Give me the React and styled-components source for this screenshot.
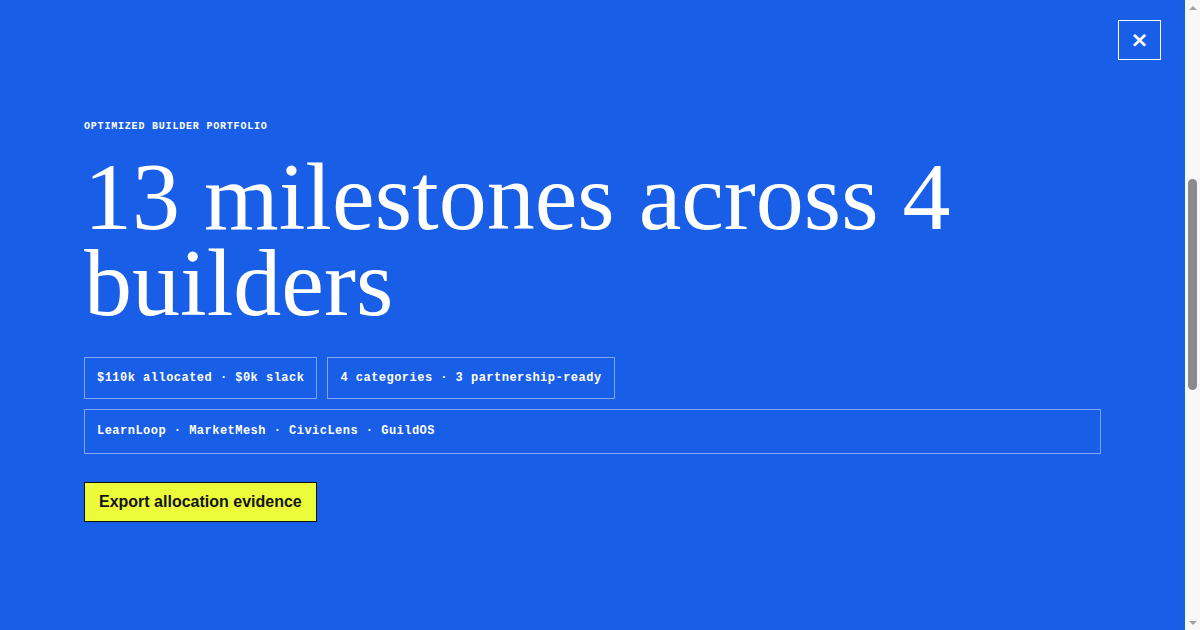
import { useLayoutEffect } from "react";
import styled, { createGlobalStyle } from "styled-components";

const GlobalStyle = createGlobalStyle`
  html, body {
    margin: 0;
    padding: 0;
  }

  body {
    background: #ffffff;
    font-family: "Liberation Sans", Arial, sans-serif;
  }
`;

const portfolio = {
  eyebrow: "Optimized builder portfolio",
  milestones: 13,
  builders: ["LearnLoop", "MarketMesh", "CivicLens", "GuildOS"],
  allocated: "$110k",
  slack: "$0k",
  categories: 4,
  partnershipReady: 3,
};

const App = () => {
  useLayoutEffect(() => {
    window.scrollTo(0, 490);
  }, []);

  const stats = [
    `${portfolio.allocated} allocated · ${portfolio.slack} slack`,
    `${portfolio.categories} categories · ${portfolio.partnershipReady} partnership-ready`,
  ];

  return (
    <>
      <GlobalStyle />
      <PageBehind />

      <Overlay role="dialog" aria-label="Optimized builder portfolio">
        <CloseButton aria-label="Close">×</CloseButton>

        <Content>
          <Eyebrow>{portfolio.eyebrow}</Eyebrow>

          <Headline>
            {portfolio.milestones} milestones across {portfolio.builders.length}{" "}
            builders
          </Headline>

          <StatRow>
            {stats.map((stat) => (
              <Pill key={stat}>{stat}</Pill>
            ))}
          </StatRow>

          <Pill wide>{portfolio.builders.join(" · ")}</Pill>

          <ExportButton>Export allocation evidence</ExportButton>
        </Content>
      </Overlay>

      {/* window scrollbar, the page under the dialog is scrolled */}
      <ScrollTrack aria-hidden="true">
        <ScrollArrow />
        <ScrollThumbArea>
          <ScrollThumb />
        </ScrollThumbArea>
        <ScrollArrow down />
      </ScrollTrack>
    </>
  );
};

export default App;

const PageBehind = styled.div`
  height: 1790px;
`;

const Overlay = styled.div`
  position: fixed;
  top: 0;
  bottom: 0;
  left: 0;
  right: 15px;
  background: #185ee6;
  color: #ffffff;
  padding: 121px 84px 0;
  box-sizing: border-box;
  overflow: hidden;
`;

const CloseButton = styled.button`
  position: absolute;
  top: 20px;
  right: 24px;
  width: 43px;
  height: 40px;
  padding: 0;
  border: 1px solid #ffffff;
  background: transparent;
  color: #ffffff;
  font-family: "DejaVu Sans", sans-serif;
  font-size: 22px;
  font-weight: 700;
  line-height: 1;
  cursor: pointer;
  display: flex;
  align-items: center;
  justify-content: center;
`;

const Content = styled.div`
  display: flex;
  flex-direction: column;
  align-items: flex-start;
`;

const Eyebrow = styled.div`
  font-family: "Liberation Mono", "Courier New", monospace;
  font-size: 10px;
  font-weight: 700;
  letter-spacing: 0.08em;
  text-transform: uppercase;
  line-height: 12px;
`;

const Headline = styled.h1`
  margin: 21px 0 0;
  font-family: "Liberation Serif", "Times New Roman", serif;
  font-size: 96px;
  font-weight: 400;
  line-height: 0.9;
  letter-spacing: 0;
`;

const StatRow = styled.div`
  display: flex;
  gap: 10px;
  margin-top: 30px;
  margin-bottom: 10px;
`;

const Pill = styled.div`
  box-sizing: border-box;
  align-self: ${(p) => (p.wide ? "stretch" : "auto")};
  border: 1px solid rgba(255, 255, 255, 0.45);
  padding: ${(p) => (p.wide ? "14px 12px" : "13px 12px 12px")};
  font-family: "Liberation Mono", "Courier New", monospace;
  font-size: 12px;
  font-weight: 700;
  letter-spacing: 0.04em;
  line-height: 15px;
  white-space: nowrap;
`;

const ExportButton = styled.button`
  margin-top: 28px;
  padding: 9px 14px 10px;
  border: 1px solid #111111;
  border-radius: 0;
  background: #edfc3a;
  color: #141414;
  font-family: "Liberation Sans", Arial, sans-serif;
  font-size: 16px;
  font-weight: 700;
  line-height: 19px;
  cursor: pointer;
`;

const ScrollTrack = styled.div`
  position: fixed;
  top: 0;
  right: 0;
  bottom: 0;
  width: 15px;
  background: #f8f8f8;
  display: flex;
  flex-direction: column;
`;

const ScrollArrow = styled.div`
  height: 15px;
  flex: none;
  display: flex;
  align-items: center;
  justify-content: center;

  &::before {
    content: "";
    width: 0;
    height: 0;
    border-left: 4px solid transparent;
    border-right: 4px solid transparent;
    ${(p) =>
      p.down
        ? "border-top: 4px solid #a3a3a3;"
        : "border-bottom: 4px solid #a3a3a3;"}
  }
`;

const ScrollThumbArea = styled.div`
  flex: 1;
  padding-top: 164px;
  display: flex;
  justify-content: center;
`;

const ScrollThumb = styled.div`
  width: 9px;
  height: 211px;
  border-radius: 5px;
  background: #8b8b8b;
`;
